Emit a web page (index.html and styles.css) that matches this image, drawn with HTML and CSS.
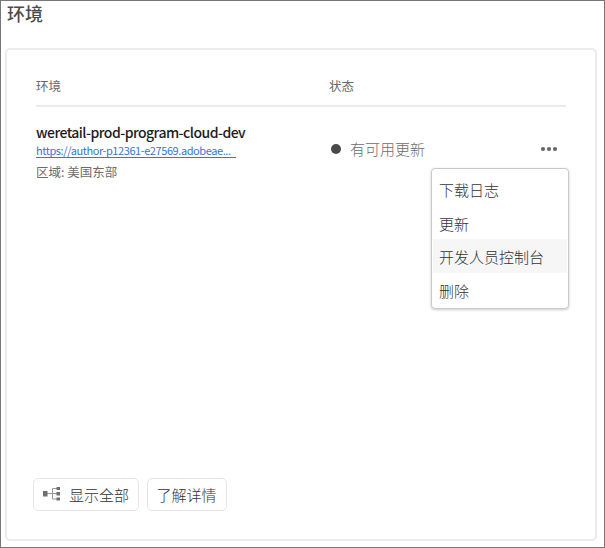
FILE: index.html
```html
<!DOCTYPE html>
<html lang="zh-CN">
<head>
<meta charset="utf-8">
<title>环境</title>
<link rel="stylesheet" href="styles.css">
</head>
<body>
<main class="page">
  <h1 class="title">环境</h1>
  <section class="card">
    <div class="row head">
      <span>环境</span>
      <span>状态</span>
    </div>
    <div class="row entry">
      <div class="info">
        <div class="name">weretail-prod-program-cloud-dev</div>
        <a class="link"><span class="url">https://author-p12361-e27569.adobeae...</span></a>
        <div class="region">区域: 美国东部</div>
      </div>
      <div class="status">
        <span class="dot"></span>
        <span class="status-text">有可用更新</span>
        <div class="more">
          <svg width="18" height="6" viewBox="0 0 18 6" fill="#666"><circle cx="3" cy="3" r="2.1"/><circle cx="9" cy="3" r="2.1"/><circle cx="15" cy="3" r="2.1"/></svg>
          <ul class="menu">
            <li>下载日志</li>
            <li>更新</li>
            <li class="active">开发人员控制台</li>
            <li>删除</li>
          </ul>
        </div>
      </div>
    </div>
    <footer class="actions">
      <button class="btn show-all">
        <svg width="19" height="16" viewBox="0 0 19 16"><path d="M5 7.500h5M15 2.500h-4.500v10.500H15M10.500 7.500H15" fill="none" stroke="#999" stroke-width="1"/><path d="M1 5h4.500v5.500H1zM14.500 1h3.500v3h-3.500zM14.500 6h3.500v3.500h-3.500zM14.500 11.500h3.500v3h-3.500z" fill="#707070"/></svg>
        <span>显示全部</span>
      </button>
      <button class="btn">了解详情</button>
    </footer>
  </section>
</main>
</body>
</html>
```
FILE: styles.css
```css
* { box-sizing: border-box; }
body {
  margin: 0;
  background: #fff;
  color: #4b4b4b;
  font-family: "Noto Sans CJK SC", sans-serif;
}
.page {
  height: 548px;
  border: 1px solid #777;
  padding: 0 7px 6px 4px;
  display: flex;
  flex-direction: column;
}
.title {
  margin: 0 0 0 2px;
  height: 47px;
  font-size: 18px;
  line-height: 25px;
  font-weight: 500;
}
.card {
  flex: 1;
  border: 2px solid #ebebeb;
  border-radius: 5px;
  padding: 20px 29px 28px;
  display: flex;
  flex-direction: column;
}
.row {
  display: grid;
  grid-template-columns: 293px 1fr;
}
.head {
  height: 37px;
  border-bottom: 2px solid #ebebeb;
  font-size: 12.5px;
  line-height: 31px;
  color: #686868;
}
.entry { padding-top: 16px; }
.name {
  font-size: 14px;
  line-height: 19px;
  height: 20px;
  font-weight: 500;
  letter-spacing: -0.53px;
  color: #1c1c1c;
  white-space: nowrap;
}
.link {
  display: block;
  width: 200px;
  height: 15px;
  border-bottom: 1px solid #3b73d9;
  font-size: 11px;
  line-height: 15px;
  letter-spacing: -0.42px;
  color: #3b73d9;
  white-space: nowrap;
}
.region {
  margin-top: 4px;
  font-size: 12.5px;
  line-height: 20px;
  color: #6c6c6c;
}
.status {
  display: flex;
  align-items: center;
  height: 24px;
  margin-top: 14px;
  margin-left: 2px;
}
.dot {
  width: 10px;
  height: 10px;
  border-radius: 50%;
  background: #4a4a4a;
}
.status-text {
  margin-left: 9px;
  font-size: 15px;
  font-weight: 300;
  color: #6c6c6c;
  line-height: 24px;
}
.more {
  position: relative;
  display: flex;
  margin-left: auto;
  margin-right: 8px;
}
.menu {
  position: absolute;
  top: 22px;
  right: -11px;
  width: 138px;
  height: 141px;
  margin: 0;
  padding: 3px 1px;
  list-style: none;
  background: #fff;
  border: 1px solid #c9c9c9;
  border-radius: 4px;
  box-shadow: 0 1px 3px rgba(0, 0, 0, 0.2);
}
.menu li {
  height: 33.500px;
  padding-left: 6px;
  font-size: 15px;
  line-height: 36px;
  font-weight: 300;
  color: #333;
  white-space: nowrap;
}
.menu .active { background: #f6f6f6; }
.actions {
  display: flex;
  gap: 8px;
  margin-top: auto;
  margin-left: -3px;
}
.btn {
  display: flex;
  align-items: center;
  height: 33px;
  padding: 0 9px 1px 8.5px;
  border: 1px solid #e6e6e6;
  border-radius: 5px;
  background: #fff;
  color: #333;
  font-family: inherit;
  font-size: 15px;
  font-weight: 300;
}
.show-all { gap: 8px; padding-left: 8px; }
```
